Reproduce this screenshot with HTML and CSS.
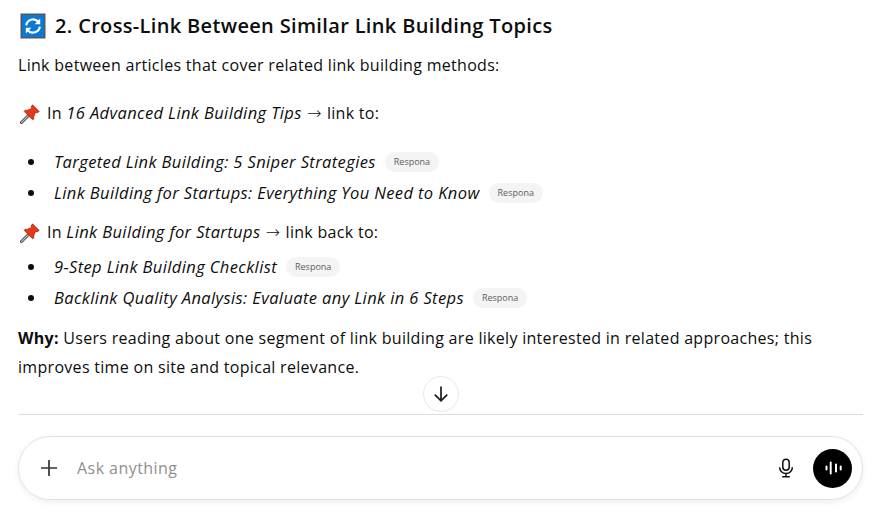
FILE: index.html
```html
<!DOCTYPE html>
<html lang="en">
<head>
    <meta charset="UTF-8">
    <meta name="viewport" content="width=device-width, initial-scale=1.0">
    <title>Cross-Link Between Similar Topics</title>
    <link rel="stylesheet" href="styles.css">
</head>
<body>
    <div class="chat">
        <div class="message">
            <h3>
                <svg class="emoji-refresh" viewBox="0 0 26 26" width="26" height="26">
                    <rect x="0.5" y="0.5" width="25" height="25" fill="#4f5a62"/>
                    <rect x="2" y="2" width="22" height="22" fill="#0b78d6"/>
                    <path d="M6.2 12.4a6.9 6.9 0 0 1 11.9-3.8" fill="none" stroke="#fff" stroke-width="2.2"/>
                    <path d="M19.8 13.6a6.9 6.9 0 0 1-11.9 3.8" fill="none" stroke="#fff" stroke-width="2.2"/>
                    <path d="M20.2 5.6v5.6h-5.6z" fill="#fff"/>
                    <path d="M5.8 20.4v-5.6h5.6z" fill="#fff"/>
                </svg>
                2. Cross-Link Between Similar Link Building Topics
            </h3>
            <p class="intro">Link between articles that cover related link building methods:</p>

            <p class="from from-first"><svg class="emoji-pin" viewBox="0 0 20 20" width="20" height="20">
                    <path d="M1.5 18.5L8 12" stroke="#3c3f42" stroke-width="3" stroke-linecap="round"/>
                    <path d="M1.5 18.5L8 12" stroke="#b9bdc0" stroke-width="1.2" stroke-linecap="round"/>
                    <path d="M12.5 .8L19.2 7.5 17 8.8 15.5 8.4 13.6 13 14 14.6 12.6 15.8 4.2 7.4 5.4 6 7 6.4 11.6 4.5 11.2 3z" fill="#e8381c" stroke="#8f1d0a" stroke-width="0.7"/>
                </svg>In <em>16 Advanced Link Building Tips</em> <span class="arrow">→</span> link to:</p>
            <ul class="links links-first">
                <li><em>Targeted Link Building: 5 Sniper Strategies</em><span class="chip">Respona</span></li>
                <li><em>Link Building for Startups: Everything You Need to Know</em><span class="chip">Respona</span></li>
            </ul>

            <p class="from"><svg class="emoji-pin" viewBox="0 0 20 20" width="20" height="20">
                    <path d="M1.5 18.5L8 12" stroke="#3c3f42" stroke-width="3" stroke-linecap="round"/>
                    <path d="M1.5 18.5L8 12" stroke="#b9bdc0" stroke-width="1.2" stroke-linecap="round"/>
                    <path d="M12.5 .8L19.2 7.5 17 8.8 15.5 8.4 13.6 13 14 14.6 12.6 15.8 4.2 7.4 5.4 6 7 6.4 11.6 4.5 11.2 3z" fill="#e8381c" stroke="#8f1d0a" stroke-width="0.7"/>
                </svg>In <em>Link Building for Startups</em> <span class="arrow">→</span> link back to:</p>
            <ul class="links links-second">
                <li><em>9-Step Link Building Checklist</em><span class="chip">Respona</span></li>
                <li><em>Backlink Quality Analysis: Evaluate any Link in 6 Steps</em><span class="chip">Respona</span></li>
            </ul>

            <p class="why"><strong>Why:</strong> Users reading about one segment of link building are likely interested in related approaches; this improves time on site and topical relevance.</p>
        </div>

        <div class="composer-wrap">
            <button class="scroll-down" aria-label="Scroll down">
                <svg viewBox="0 0 20 20" width="20" height="20">
                    <path d="M10 2.5v14M3.8 10.6l6.2 6.2 6.2-6.2" fill="none" stroke="#1a1a1a" stroke-width="1.7"/>
                </svg>
            </button>
            <div class="composer">
                <svg class="plus" viewBox="0 0 18 18" width="18" height="18">
                    <path d="M9 1v16M1 9h16" stroke="#333" stroke-width="1.7" fill="none"/>
                </svg>
                <span class="placeholder">Ask anything</span>
                <svg class="mic" viewBox="0 0 20 20" width="20" height="20">
                    <rect x="6.8" y="1.2" width="6.4" height="11" rx="3.2" fill="none" stroke="#111" stroke-width="1.5"/>
                    <path d="M3.6 9.2a6.4 6.4 0 0 0 12.8 0M10 15.6v3M6.2 18.8h7.6" fill="none" stroke="#111" stroke-width="1.5"/>
                </svg>
                <button class="voice" aria-label="Voice mode">
                    <svg viewBox="0 0 20 20" width="20" height="20">
                        <path d="M3.5 8.5v3M7.7 4.5v11M13 6.5v7M17.7 8.5v3" stroke="#fff" stroke-width="2" stroke-linecap="round" fill="none"/>
                    </svg>
                </button>
            </div>
        </div>
    </div>
</body>
</html>
```

FILE: styles.css
```css
html, body {
    height: 100%;
}

body {
    margin: 0;
    font-family: "Open Sans", "Noto Sans", sans-serif;
    font-size: 16px;
    letter-spacing: 0.3px;
    color: #0d0d0d;
    background-color: white;
    overflow: hidden;
}

.chat {
    display: flex;
    flex-direction: column;
    height: 512px;
    padding: 0 9px 0 18px;
}

.message {
    flex: 1;
}

h3 {
    display: flex;
    align-items: center;
    gap: 9px;
    margin: 12px 0 0 0;
    font-size: 20px;
    line-height: 28px;
    font-weight: 600;
    letter-spacing: 0.34px;
}

.emoji-refresh {
    margin-left: 2px;
}

p {
    margin: 0;
    line-height: 28px;
}

em {
    font-size: 16.5px;
    letter-spacing: 0.38px;
}

.arrow {
    margin: 0 1px;
    font-family: "DejaVu Sans", sans-serif;
    font-size: 17px;
    font-weight: 200;
    letter-spacing: 0;
    line-height: 1;
}

.intro {
    margin-top: 11px;
}

.from {
    margin-top: 10px;
}

.from-first {
    margin-top: 20px;
}

.emoji-pin {
    margin: 0 7px 0 2px;
    vertical-align: -5px;
}

.links {
    margin: 0;
    padding: 0 0 0 10px;
    list-style: none;
}

.links-first {
    margin-top: 19px;
}

.links-second {
    margin-top: 5px;
}

.links li {
    display: flex;
    align-items: center;
    line-height: 31px;
}

.links li::before {
    content: "";
    width: 6px;
    height: 6px;
    margin-right: 20px;
    background-color: #0d0d0d;
    border-radius: 50%;
}

.chip {
    margin-left: 9px;
    padding: 0 9px;
    font-size: 9px;
    line-height: 20px;
    letter-spacing: 0;
    color: #5d5d5d;
    background-color: #f4f4f4;
    border-radius: 10px;
}

.why {
    margin-top: 11px;
    line-height: 29px;
}

.composer-wrap {
    position: relative;
    border-top: 1px solid #dcdcdc;
    margin-bottom: 12px;
    padding-top: 21px;
}

.scroll-down {
    position: absolute;
    top: -39px;
    left: 405px;
    display: flex;
    align-items: center;
    justify-content: center;
    width: 36px;
    height: 36px;
    padding: 0;
    background-color: white;
    border: 1px solid #e8e8e8;
    border-radius: 50%;
}

.composer {
    display: flex;
    align-items: center;
    height: 64px;
    box-sizing: border-box;
    padding: 0 10px 0 21px;
    border: 1px solid #e2e2e2;
    border-radius: 32px;
    box-shadow: 0 2px 6px rgba(0, 0, 0, 0.07);
}

.plus {
    flex: none;
}

.placeholder {
    flex: 1;
    margin-left: 19px;
    color: #8f8f8f;
    font-size: 16px;
    letter-spacing: 0.45px;
}

.mic {
    flex: none;
    margin-right: 17px;
}

.voice {
    display: flex;
    align-items: center;
    justify-content: center;
    width: 39px;
    height: 39px;
    padding: 0;
    border: none;
    border-radius: 50%;
    background-color: black;
}
```
